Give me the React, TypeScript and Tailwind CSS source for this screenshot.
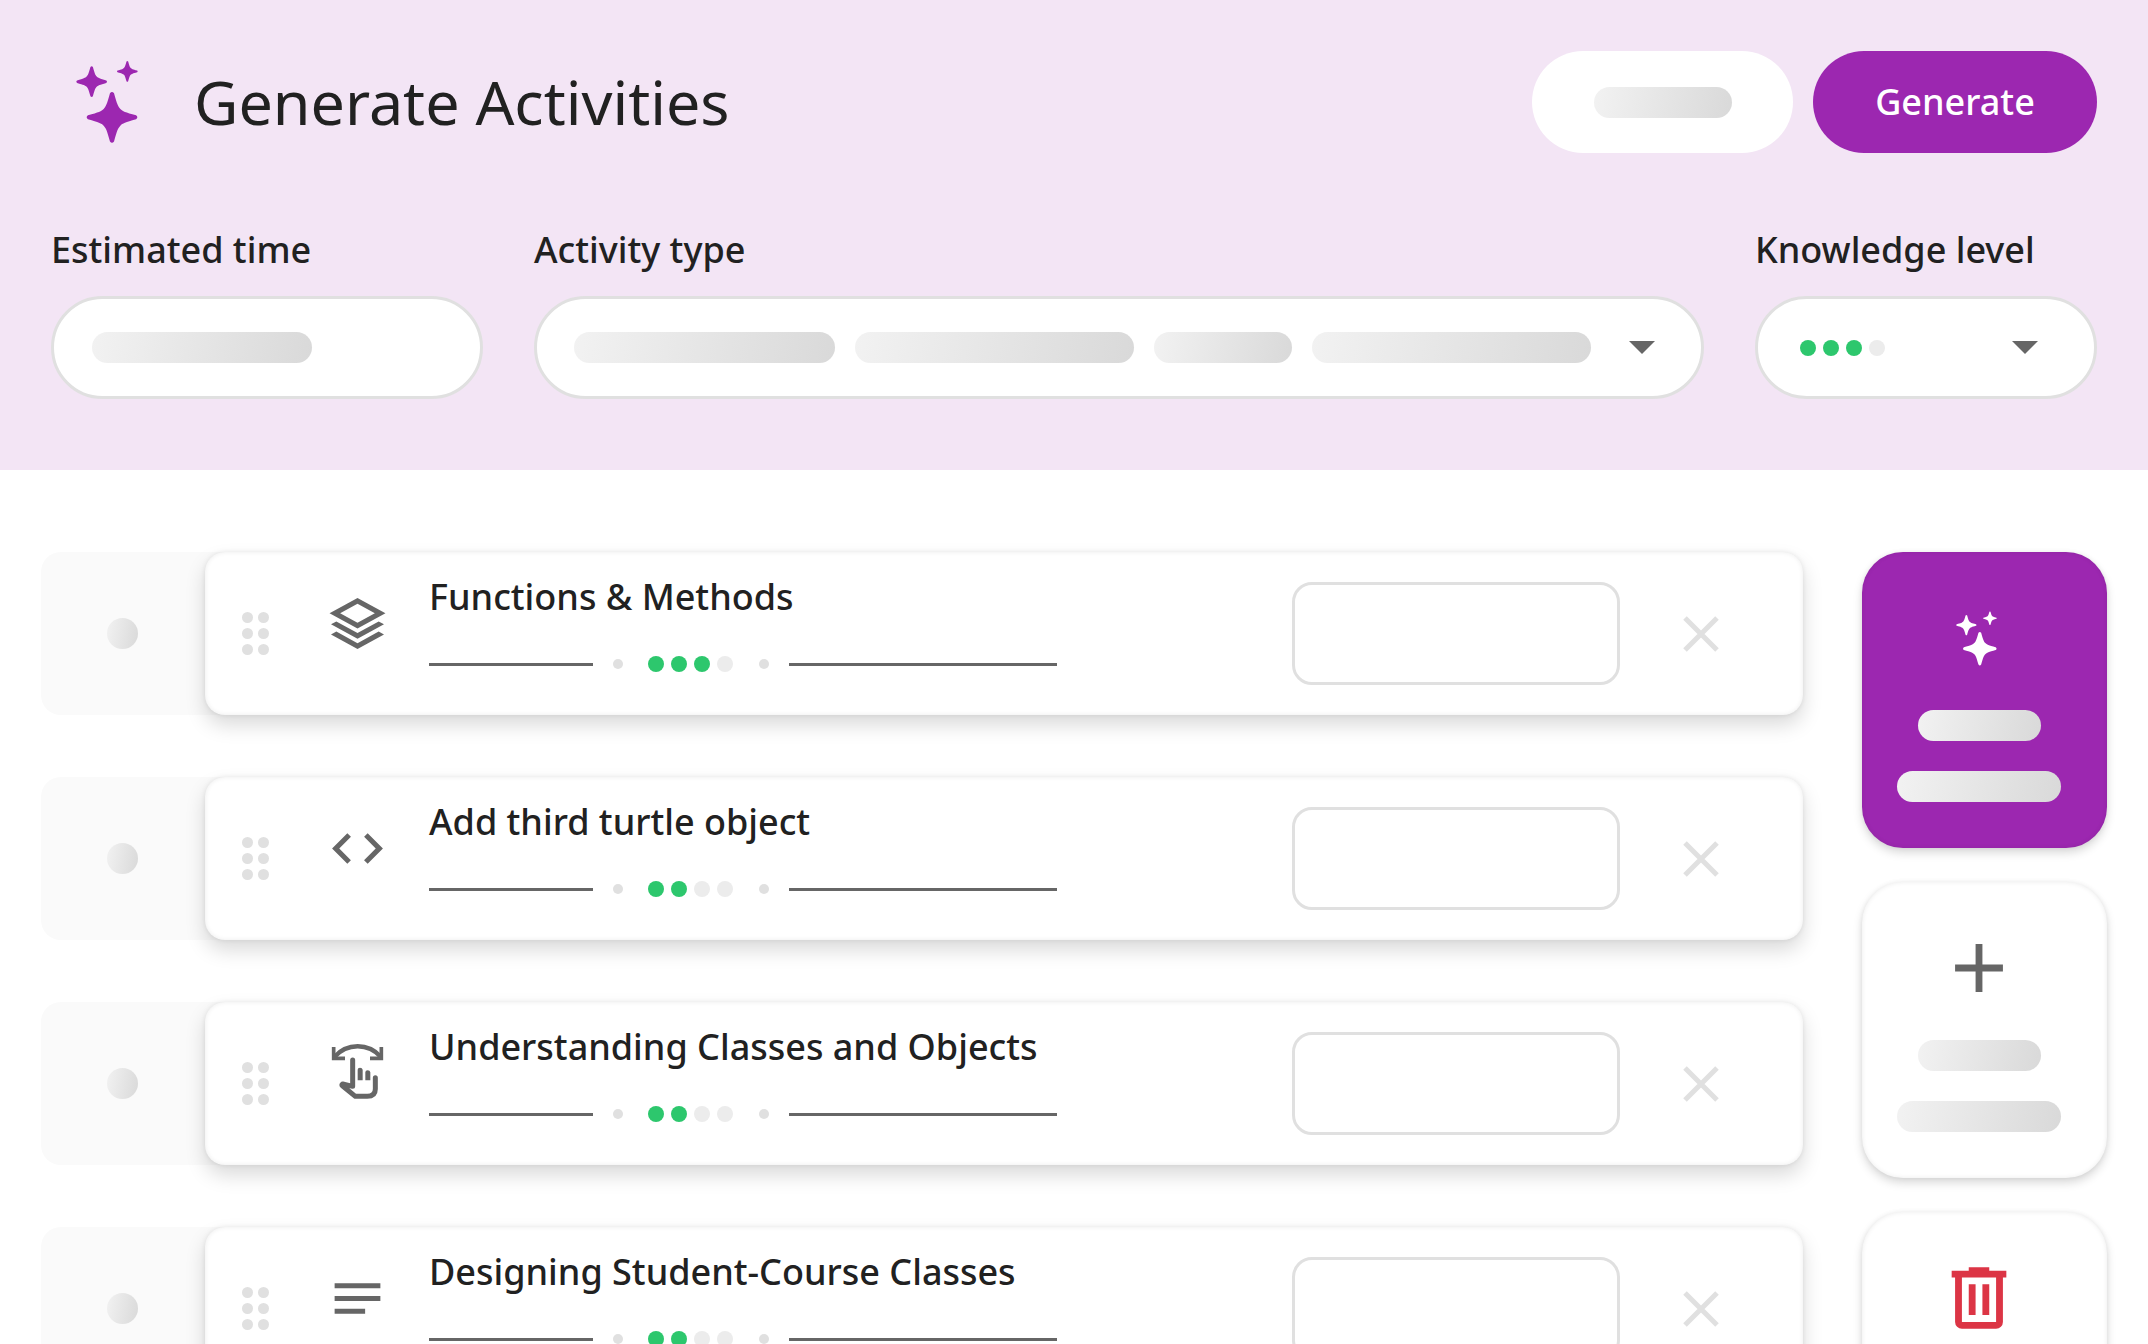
import React from "react";

const Skeleton = ({ className = "" }: { className?: string }) => (
  <span className={`block h-[31px] rounded-full bg-linear-100 from-[#f2f2f2] to-[#d9d9d9] ${className}`} />
);

const star =
  "M-8-95Q0-105 8-95C20-52 24-42 33-33C42-24 52-20 95-8Q105 0 95 8C52 20 42 24 33 33C24 42 20 52 8 95Q0 105-8 95C-20 52-24 42-33 33C-42 24-52 20-95 8Q-105 0-95-8C-52-20-42-24-33-33C-24-42-20-52-8-95Z";

const Sparkles = ({ className = "" }: { className?: string }) => (
  <svg viewBox="31 33 186 246" fill="currentColor" className={className} aria-hidden="true">
    <path d={star} transform="translate(139 202) scale(0.76)" />
    <path d={star} transform="translate(78 95) scale(0.46)" />
    <path d={star} transform="translate(185 64) scale(0.31)" />
  </svg>
);

const Symbol = ({ d, className = "" }: { d: string; className?: string }) => (
  <svg viewBox="0 -960 960 960" fill="currentColor" className={className} aria-hidden="true">
    <path d={d} />
  </svg>
);

const stacks =
  "M480-400 40-640l440-240 440 240-440 240Zm0 160L63-467l84-46 333 182 333-182 84 46-417 227Zm0 160L63-307l84-46 333 182 333-182 84 46L480-80Zm0-411 273-149-273-149-273 149 273 149Z";
const code =
  "M320-240 80-480l240-240 57 57-184 184 183 183-56 56Zm320 0-57-57 184-184-183-183 56-56 240 240-240 240Z";
const notes = "M120-240v-80h480v80H120Zm0-200v-80h720v80H120Zm0-200v-80h720v80H120Z";
const trash =
  "M280-120q-33 0-56.500-23.500T200-200v-520h-40v-80h200v-40h240v40h200v80h-40v520q0 33-23.500 56.500T680-120H280Zm400-600H280v520h400v-520ZM360-280h80v-360h-80v360Zm160 0h80v-360h-80v360Z";
const plus = "M440-440H200v-80h240v-240h80v240h240v80H520v240h-80v-240Z";

const SwipeHand = ({ className = "" }: { className?: string }) => (
  <svg viewBox="0 0 183 183" fill="none" stroke="currentColor" className={className} aria-hidden="true">
    <path d="M20 12v34h34M163 12v34h-34" strokeWidth="11" />
    <path d="M22 42C60 -1 124 -1 162 42" strokeWidth="13" />
    <path d="M77 51v79l-30-7q-5 3 0 6l38 31h36q24 0 24-22v-34" strokeWidth="15" strokeLinecap="round" strokeLinejoin="round" />
    <path d="M92 112V80q0-6 7-6t8 6V112zM115 112V88q0-6 7-6t8 6V112z" fill="currentColor" stroke="none" />
  </svg>
);

const Caret = () => (
  <svg viewBox="0 0 26 13" className="h-[13px] w-[26px] shrink-0 text-[#666666]" fill="currentColor" aria-hidden="true">
    <path d="M0 0h26L13 13z" />
  </svg>
);

const Level = ({ value }: { value: number }) => (
  <span className="flex gap-[7px]">
    {[1, 2, 3, 4].map((n) => (
      <span key={n} className={`size-4 rounded-full ${n <= value ? "bg-[#2dc76d]" : "bg-[#ececec]"}`} />
    ))}
  </span>
);

const label = "block text-[36px] leading-[50px] font-medium";
const pill = "flex h-[103px] w-full items-center rounded-full border-3 border-[#e0e0e0] bg-white";

const activities = [
  { title: "Functions & Methods", level: 3, icon: <Symbol d={stacks} className="size-[61px]" /> },
  { title: "Add third turtle object", level: 2, icon: <Symbol d={code} className="size-[61px]" /> },
  { title: "Understanding Classes and Objects", level: 2, icon: <SwipeHand className="size-[61px]" /> },
  { title: "Designing Student-Course Classes", level: 2, icon: <Symbol d={notes} className="size-[61px]" /> },
];

const ActivityRow = ({ title, level, icon }: { title: string; level: number; icon: React.ReactNode }) => (
  <li className="flex h-[163px] rounded-[20px] bg-[#fafafa]">
    <div className="flex w-[164px] shrink-0 items-center justify-center pr-0.5">
      <Skeleton className="w-[31px]" />
    </div>
    <article className="flex flex-1 rounded-[20px] bg-white pr-[84px] shadow-[0_10px_20px_rgba(0,0,0,0.15),0_0_5px_rgba(0,0,0,0.08),inset_0_0_5px_rgba(0,0,0,0.08)]">
      <button type="button" aria-label={`Reorder ${title}`} className="ml-[37px] grid grid-cols-2 content-center gap-[5px]">
        {[0, 1, 2, 3, 4, 5].map((n) => (
          <span key={n} className="size-[11px] rounded-full bg-[#e0e0e0]" />
        ))}
      </button>
      <div className="mt-[41px] ml-[58px] text-[#666666]">{icon}</div>
      <div className="ml-[41px] flex-1 pt-5">
        <h2 className="text-[36px] leading-[50px] font-medium whitespace-nowrap">{title}</h2>
        <div className="mt-[34px] flex h-4 items-center">
          <span className="h-[3px] w-[164px] bg-[#666666]" />
          <span className="ml-5 size-2.5 rounded-full bg-[#e0e0e0]" />
          <span className="mr-[26px] ml-[25px]">
            <Level value={level} />
          </span>
          <span className="size-2.5 rounded-full bg-[#e0e0e0]" />
          <span className="ml-5 h-[3px] w-[268px] bg-[#666666]" />
        </div>
      </div>
      <input aria-label={`${title} value`} className="mr-[63px] h-[103px] w-[328px] shrink-0 self-center rounded-[20px] border-3 border-[#e0e0e0] bg-transparent px-6 text-[36px] outline-none" />
      <button type="button" aria-label={`Remove ${title}`} className="self-center text-[#e0e0e0]">
        <svg viewBox="0 0 36 36" className="size-9" fill="none" stroke="currentColor" strokeWidth="5" aria-hidden="true">
          <path d="M2 2l32 32M34 2L2 34" />
        </svg>
      </button>
    </article>
  </li>
);

const SideButton = ({ name, primary, children }: { name: string; primary?: boolean; children: React.ReactNode }) => (
  <button
    type="button"
    aria-label={name}
    className={`flex h-[296px] w-[245px] flex-col items-center rounded-[41px] pt-[45px] pr-[11px] shadow-[0_5px_10px_rgba(0,0,0,0.15),0_0_5px_rgba(0,0,0,0.06),inset_0_0_5px_rgba(0,0,0,0.08)] ${primary ? "bg-[#9c27b0] text-white" : "bg-white"}`}
  >
    <span className="flex size-[82px] items-center justify-center">{children}</span>
    <Skeleton className="mt-[31px] w-[123px]" />
    <Skeleton className="mt-[30px] w-[164px]" />
  </button>
);

export default function App() {
  return (
    <div className="h-screen overflow-hidden bg-white font-['Noto_Sans',sans-serif] text-[#212121]">
      <header className="h-[470px] bg-[#f3e5f5] px-[51px] pt-[51px]">
        <div className="flex h-[102px] items-center">
          <Sparkles className="ml-[25px] h-[82px] w-[62px] text-[#9c27b0]" />
          <h1 className="ml-14 flex-1 text-[61px] leading-[80px]">Generate Activities</h1>
          <button type="button" aria-label="Cancel" className="mr-5 flex h-[102px] w-[261px] items-center justify-center rounded-full bg-white">
            <Skeleton className="w-[138px]" />
          </button>
          <button type="button" className="h-[102px] w-[284px] rounded-full bg-[#9c27b0] text-[36px] font-medium text-white">
            Generate
          </button>
        </div>
        <div className="mt-[72px] flex gap-[51px]">
          <div className="w-[432px]">
            <span id="time" className={label}>Estimated time</span>
            <button type="button" aria-labelledby="time" className={`${pill} mt-[21px] pl-[38px]`}>
              <Skeleton className="w-[220px]" />
            </button>
          </div>
          <div className="flex-1">
            <span id="type" className={label}>Activity type</span>
            <button type="button" aria-labelledby="type" className={`${pill} mt-[21px] gap-5 pr-[46px] pl-[37px]`}>
              <Skeleton className="w-[261px]" />
              <Skeleton className="w-[279px]" />
              <Skeleton className="w-[138px]" />
              <Skeleton className="w-[279px]" />
              <span className="ml-auto">
                <Caret />
              </span>
            </button>
          </div>
          <div className="w-[342px]">
            <span id="level" className={label}>Knowledge level</span>
            <button type="button" aria-labelledby="level" className={`${pill} mt-[21px] justify-between pr-14 pl-[42px]`}>
              <Level value={3} />
              <Caret />
            </button>
          </div>
        </div>
      </header>
      <main className="flex gap-[59px] px-[41px] pt-[82px]">
        <ul className="flex flex-1 flex-col gap-[62px]">
          {activities.map((a) => (
            <ActivityRow key={a.title} {...a} />
          ))}
        </ul>
        <aside className="flex flex-col gap-[34px]">
          <SideButton name="Generate activity" primary>
            <Sparkles className="mr-[6px] h-[55px] w-[41px]" />
          </SideButton>
          <SideButton name="Add activity">
            <Symbol d={plus} className="size-[82px] text-[#666666]" />
          </SideButton>
          <SideButton name="Delete activities">
            <Symbol d={trash} className="size-[82px] text-[#dc3545]" />
          </SideButton>
        </aside>
      </main>
    </div>
  );
}
